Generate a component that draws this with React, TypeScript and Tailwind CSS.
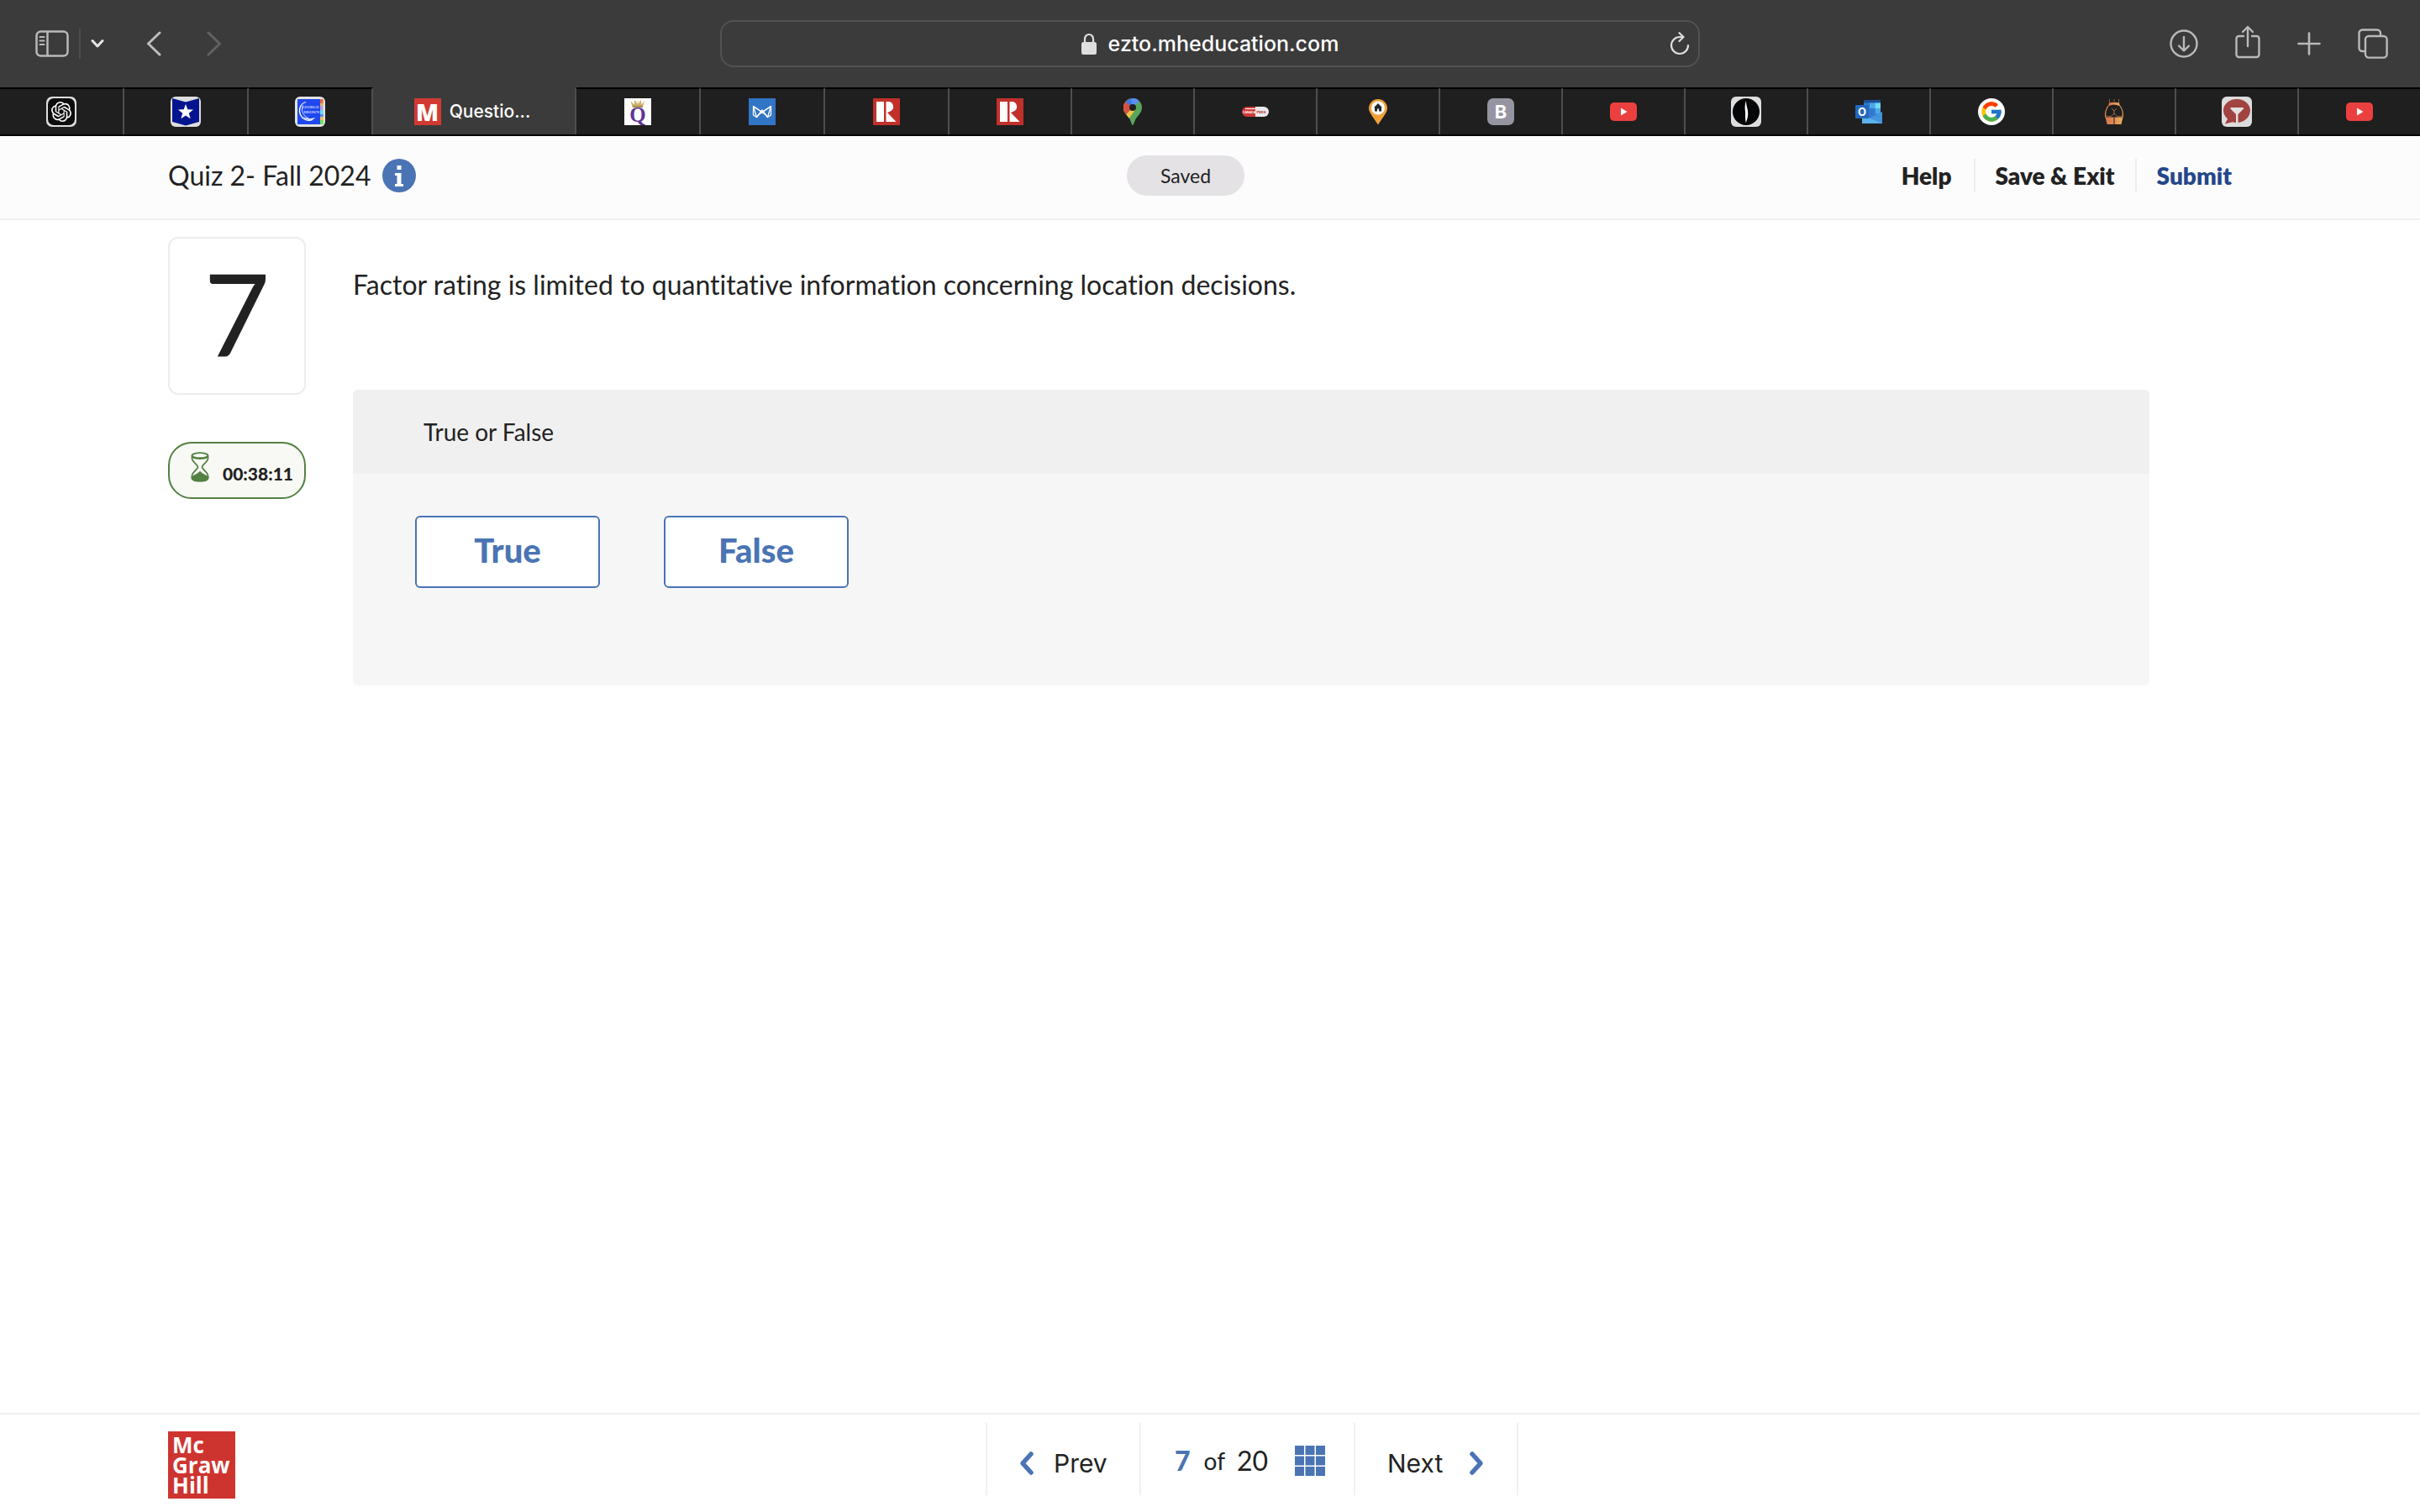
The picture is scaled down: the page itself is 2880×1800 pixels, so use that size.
import type { ReactNode } from "react";
import { SiOpenai } from "react-icons/si";
import { FcGoogle } from "react-icons/fc";

/* ---------- toolbar icons ---------- */

const SidebarIcon = () => (
  <svg width="40" height="32" viewBox="0 0 40 32" fill="none" stroke="#b9b9b9" strokeWidth="2.5">
    <rect x="1.5" y="1.5" width="37" height="29" rx="5" />
    <path d="M14.5 1.5v29" />
    <path d="M5.5 8h5M5.5 12.5h5M5.5 17h5" strokeWidth="2" strokeLinecap="round" />
  </svg>
);

const SmallDownIcon = () => (
  <svg width="16" height="12" viewBox="0 0 16 12" fill="none" stroke="#e6e6e6" strokeWidth="3" strokeLinecap="round" strokeLinejoin="round">
    <path d="M2 2.5l6 6.5 6-6.5" />
  </svg>
);

const BackIcon = () => (
  <svg width="18" height="30" viewBox="0 0 18 30" fill="none" stroke="#bdbdbd" strokeWidth="3" strokeLinecap="round" strokeLinejoin="round">
    <path d="M16 2L2.5 15 16 28" />
  </svg>
);

const ForwardIcon = () => (
  <svg width="18" height="30" viewBox="0 0 18 30" fill="none" stroke="#626262" strokeWidth="3" strokeLinecap="round" strokeLinejoin="round">
    <path d="M2 2l13.5 13L2 28" />
  </svg>
);

const LockIcon = () => (
  <svg width="18" height="26" viewBox="0 0 18 26">
    <path d="M4 12V7.5a5 5.5 0 0 1 10 0V12" fill="none" stroke="#dfdfdf" strokeWidth="2.2" />
    <rect x="0" y="11" width="18" height="15" rx="2.5" fill="#dfdfdf" />
  </svg>
);

const ReloadIcon = () => (
  <svg width="24" height="28" viewBox="0 0 24 28" fill="none" stroke="#dedede" strokeWidth="2.2" strokeLinecap="round" strokeLinejoin="round">
    <path d="M22 16a10 10 0 1 1-10-10h4" />
    <path d="M11.5 1.2L16.5 6l-5 5" />
  </svg>
);

const DownloadIcon = () => (
  <svg width="34" height="36" viewBox="0 0 34 36" fill="none" stroke="#b9b9b9" strokeWidth="2.4" strokeLinecap="round" strokeLinejoin="round">
    <circle cx="17" cy="18" r="15.5" />
    <path d="M17 10v16M11 20.5l6 6 6-6" />
  </svg>
);

const ShareIcon = () => (
  <svg width="30" height="40" viewBox="0 0 30 40" fill="none" stroke="#b9b9b9" strokeWidth="2.4" strokeLinecap="round" strokeLinejoin="round">
    <path d="M10 13H4.5A3 3 0 0 0 1.500 16v19a3 3 0 0 0 3 3h21a3 3 0 0 0 3-3V16a3 3 0 0 0-3-3H20" />
    <path d="M15 25V2M9 8l6-6 6 6" />
  </svg>
);

const PlusIcon = () => (
  <svg width="28" height="28" viewBox="0 0 28 28" fill="none" stroke="#b9b9b9" strokeWidth="2.6" strokeLinecap="round">
    <path d="M14 1.5v25M1.5 14h25" />
  </svg>
);

const TabsIcon = () => (
  <svg width="36" height="36" viewBox="0 0 36 36" fill="none" stroke="#b9b9b9" strokeWidth="2.4">
    <path d="M9 27H5.5a4 4 0 0 1-4-4V5.500a4 4 0 0 1 4-4H23a4 4 0 0 1 4 4V9" />
    <rect x="9" y="9" width="25.600" height="25.600" rx="4" />
  </svg>
);

/* ---------- tab favicons ---------- */

const OpenAiFavicon = () => (
  <span className="flex size-9 items-center justify-center rounded-[7px] bg-[#dedede]">
    <span className="flex size-8 items-center justify-center rounded-[7px] bg-[#0d0d0d] text-white">
      <SiOpenai size={24} />
    </span>
  </span>
);

const StarFavicon = () => (
  <svg width="36" height="36" viewBox="0 0 36 36">
    <rect width="36" height="36" rx="6" fill="#dedede" />
    <path d="M2 2l16 4.500L34 2v28l-16 4.500L2 30z" fill="#04148f" />
    <path d="M18 9l2.300 6.300 6.700.3-5.200 4.200 1.800 6.500-5.600-3.700-5.600 3.700 1.800-6.500L9 15.600l6.700-.3z" fill="#fff" />
  </svg>
);

const GeorgeBrownFavicon = () => (
  <svg width="36" height="36" viewBox="0 0 36 36">
    <rect width="36" height="36" rx="6" fill="#e2e2e2" />
    <rect x="3" y="3" width="27" height="30" fill="#1f48ee" />
    <rect x="30" y="3" width="3.500" height="30" fill="#b69be0" />
    <rect x="30" y="3" width="3.500" height="5" fill="#ee6a2c" />
    <rect x="30" y="8" width="3.500" height="3" fill="#f0b45a" />
    <rect x="30" y="16" width="3.500" height="5" fill="#63dcf5" />
    <rect x="30" y="21" width="3.500" height="3" fill="#4b8df0" />
    <rect x="30" y="24" width="3.500" height="4" fill="#f3c04e" />
    <rect x="30" y="28" width="3.500" height="5" fill="#6dea4b" />
    <path d="M13 6.500C6 8.500 4 16 6.500 21.500 9 27 15 30 21 27.500" fill="none" stroke="#fff" strokeWidth="1.300" />
    <path d="M9.500 10.500c-2.500 6 0 12.500 6.500 15" fill="none" stroke="#fff" strokeWidth=".8" />
    <path d="M9 23.500c4 5 11 6 15.500 1.500-4.500 1.500-10 2-15.500-1.500z" fill="#fff" />
    <text x="8.500" y="13.500" fontSize="5" fontFamily="Liberation Serif, serif" fill="#fff">GEORGE</text>
    <text x="10.500" y="19.500" fontSize="5" fontFamily="Liberation Serif, serif" fill="#fff">BROWN</text>
  </svg>
);

const McGrawFavicon = () => (
  <span className="flex size-8 items-center justify-center bg-[#d23a31] font-['Open_Sans',sans-serif] text-[28px] leading-8 font-extrabold text-white">M</span>
);

const QFavicon = () => (
  <svg width="32" height="32" viewBox="0 0 32 32">
    <rect width="32" height="32" fill="#fff" />
    <path d="M9.500 10.500L7.500 3l4 4.500L12.500 1.500l3 5.500L16 .5l.8 6.500 2.700-5.500 1 6L24 3l-2 7.500z" fill="#cdb06a" />
    <path d="M10 10h12" stroke="#8f7436" strokeWidth="1.300" />
    <text x="16" y="27.500" textAnchor="middle" fontSize="25" fontWeight="700" fontFamily="Liberation Serif, serif" fill="#5f3596">Q</text>
  </svg>
);

const FoxFavicon = () => (
  <svg width="32" height="32" viewBox="0 0 32 32" fill="none" stroke="#fff" strokeWidth="1.300" strokeLinejoin="round">
    <rect width="32" height="32" fill="#3274c5" stroke="none" />
    <path d="M5.500 9.500l10.500 7 10.500-7V20l-4 2.500L16 14l-6.500 8.500-4-2.500z" />
    <path d="M5.500 9.500L20 19.500l2.500 3M26.500 9.500L12 19.500l-2.500 3M5.500 9.500l4 13M26.500 9.500l-4 13" />
  </svg>
);

const RealtorFavicon = () => (
  <svg width="32" height="32" viewBox="0 0 32 32">
    <rect width="32" height="32" fill="#c2302b" />
    <rect x="4" y="4" width="9" height="24" fill="#fff" />
    <path d="M15.500 4H18a6 6 0 0 1 2.500 11.500L17 17l10.500 11h-12z" fill="#fff" />
  </svg>
);

const MapsFavicon = () => (
  <svg width="32" height="32" viewBox="0 0 32 32">
    <clipPath id="maps-pin">
      <path d="M16 0a11 11 0 0 1 11 11c0 6-4 8.500-7 13-1.800 2.700-2.800 8-4 8s-2.200-5.300-4-8c-3-4.500-7-7-7-13A11 11 0 0 1 16 0z" />
    </clipPath>
    <g clipPath="url(#maps-pin)">
      <rect width="32" height="32" fill="#5aa55c" />
      <path d="M0 28L20 4 4 0 0 14z" fill="#f4c243" />
      <path d="M0 16V0h12l4 11-9 9z" fill="#da5040" />
      <path d="M7 4L16 11 25 1 16-2z" fill="#3b78e0" />
      <path d="M16 11L25 2l-8-4-3 4z" fill="#5a8df0" />
      <path d="M6 22l10-11 3 3-9 12z" fill="#f4c243" />
    </g>
    <circle cx="16" cy="11" r="4" fill="#1f1f1f" />
  </svg>
);

const PillFavicon = () => (
  <svg width="32" height="32" viewBox="0 0 32 32">
    <path d="M6 10h10v12H6a6 6 0 0 1 0-12z" fill="#cf3a38" />
    <path d="M16 10h10a6 6 0 0 1 0 12H16z" fill="#e9e9e9" />
    <path d="M4 12.500h12" stroke="#fff" strokeWidth="1" />
    <text x="1" y="17.700" fontSize="3.500" fontWeight="700" fontFamily="Liberation Sans, sans-serif" fill="#fff">CANADA</text>
    <text x="17.500" y="17.900" fontSize="4" fontWeight="700" fontFamily="Liberation Sans, sans-serif" fill="#b3262a">PEDS</text>
  </svg>
);

const HousePinFavicon = () => (
  <svg width="32" height="32" viewBox="0 0 32 32">
    <path d="M16 1a11 11 0 0 1 11 11c0 5-5 10-11 19.500C10 22 5 17 5 12A11 11 0 0 1 16 1z" fill="#efa13c" />
    <circle cx="16" cy="11.500" r="8" fill="#fff" />
    <path d="M16 6l5 5h-1v4.500h-3v-3h-2v3h-3V11h-1z" fill="#23272e" />
  </svg>
);

const BFavicon = () => (
  <span className="flex size-8 items-center justify-center rounded-[7px] bg-[#9595a2] font-['Inter',sans-serif] text-[22px] leading-8 font-bold text-white">B</span>
);

const YoutubeFavicon = () => (
  <svg width="32" height="32" viewBox="0 0 32 32">
    <rect y="5" width="32" height="22" rx="5" fill="#ec4040" />
    <path d="M13 11.500v9l7.500-4.500z" fill="#fff" />
  </svg>
);

const FlameFavicon = () => (
  <svg width="36" height="36" viewBox="0 0 36 36">
    <rect width="36" height="36" rx="6" fill="#dedede" />
    <circle cx="18" cy="18" r="16" fill="#050608" />
    <path d="M18 5c-2 6-1.300 9-1 13 .2 4-.3 8 .7 13 2.300-5 3-9 2.300-14-.5-4-2-7-2-12z" fill="#fff" />
  </svg>
);

const OutlookFavicon = () => (
  <svg width="32" height="32" viewBox="0 0 32 32">
    <rect x="10" y="2" width="20" height="24" fill="#3279cf" />
    <rect x="10" y="2" width="20" height="3.500" fill="#1d4f97" />
    <rect x="17" y="5.500" width="6.500" height="6.500" fill="#4ba6e4" />
    <rect x="23.500" y="5.500" width="6.500" height="6.500" fill="#72dafa" />
    <rect x="23.500" y="12" width="6.500" height="6.500" fill="#4ba6e4" />
    <rect x="17" y="12" width="6.500" height="6.500" fill="#2f7ad0" />
    <path d="M32 16v14H8l12-8z" fill="#4394dc" />
    <path d="M8 20l24 10H8z" fill="#5cb2ec" />
    <rect y="8" width="16" height="16" rx="1" fill="#2468bd" />
    <text x="8" y="21" textAnchor="middle" fontSize="13" fontWeight="700" fontFamily="Inter, sans-serif" fill="#fff">O</text>
  </svg>
);

const GoogleFavicon = () => (
  <span className="flex size-8 items-center justify-center rounded-full bg-white">
    <FcGoogle size={28} />
  </span>
);

const FigureFavicon = () => (
  <svg width="32" height="32" viewBox="0 0 32 32">
    <defs>
      <linearGradient id="figure-fade" x1="0" x2="1">
        <stop offset="0" stopColor="#d9714f" />
        <stop offset="1" stopColor="#e8ae5e" />
      </linearGradient>
    </defs>
    <path d="M10.500 1v5M21.500 1v5M16 1v3" stroke="#8a5a3c" strokeWidth="1" />
    <path d="M10 5.500c4-1 8-1 12 0l1 4c-4-2.500-10-2.500-14 0z" fill="url(#figure-fade)" />
    <path d="M9 9c-4 6-4 10-3 14M23 9c4 6 4 10 3 14" fill="none" stroke="#d98a55" strokeWidth="1.300" />
    <path d="M7 21c4 2 7 0 9-3 2 3 5 5 9 3M13 12l3 3 3-3M16 15v4" fill="none" stroke="#a86a45" strokeWidth="1" />
    <path d="M5.500 22.500h10V31H7.500zM16.500 22.500h10L24.500 31h-8z" fill="url(#figure-fade)" />
  </svg>
);

const FunnelFavicon = () => (
  <svg width="36" height="36" viewBox="0 0 36 36">
    <rect width="36" height="36" rx="6" fill="#dcdcdc" />
    <path d="M18 3c9 0 16 6 16 13.500S27 31 18 31c-2 0-3.500-.2-5-.7L4 32.500l3-6C4 24 2 20.500 2 16.500 2 9 9 3 18 3z" fill="#a14340" />
    <path d="M10.500 13h15.500v1.500L19.500 21v10h-2.500V21l-6.500-6.500z" fill="#e3e0e0" />
  </svg>
);

/* ---------- page icons ---------- */

const InfoIcon = () => (
  <svg width="40" height="40" viewBox="0 0 40 40">
    <circle cx="20" cy="20" r="20" fill="#4a74b4" />
    <path d="M17.500 8h5v5h-5zM15 17h7.500v13H25v3H15v-3h2.500V20H15z" fill="#fff" />
  </svg>
);

const HourglassIcon = () => (
  <svg width="22" height="36" viewBox="0 0 22 36" fill="none" stroke="#538142" strokeWidth="1.800">
    <path d="M1.500 4.500v3C1.500 12 8.500 15 8.500 18S1.500 24 1.500 28.500v3M20.500 4.500v3c0 4.500-7 7.500-7 10.500s7 6 7 10.500v3" />
    <ellipse cx="11" cy="4.200" rx="9.500" ry="3" />
    <path d="M2 6.500c4 2.500 14 2.500 18 0" strokeWidth="1.300" />
    <path d="M1.500 30c2-2 7-2.500 9.500-6 2.500 3.500 7.500 4 9.500 6v1.800c-2 4-17 4-19 0z" fill="#538142" />
  </svg>
);

const Chevron = ({ d }: { d: string }) => (
  <svg width="20" height="30" viewBox="0 0 20 30" fill="none" stroke="#4a74b4" strokeWidth="5.500" strokeLinecap="round" strokeLinejoin="round">
    <path d={d} />
  </svg>
);

const GridIcon = () => (
  <svg width="36" height="36" viewBox="0 0 36 36" fill="#4a74b4">
    {[0, 12.5, 25].map((y) => [0, 12.5, 25].map((x) => <rect key={`${x}-${y}`} x={x} y={y} width="11" height="11" />))}
  </svg>
);

/* ---------- browser chrome ---------- */

const wideTabs: { name: string; icon: ReactNode }[] = [
  { name: "ChatGPT", icon: <OpenAiFavicon /> },
  { name: "Course Hero", icon: <StarFavicon /> },
  { name: "George Brown College", icon: <GeorgeBrownFavicon /> },
];

const midTabs: { name: string; icon: ReactNode }[] = [
  { name: "Q", icon: <QFavicon /> },
  { name: "Fox", icon: <FoxFavicon /> },
  { name: "Realtor", icon: <RealtorFavicon /> },
];

const narrowTabs: { name: string; icon: ReactNode }[] = [
  { name: "Realtor", icon: <RealtorFavicon /> },
  { name: "Google Maps", icon: <MapsFavicon /> },
  { name: "Canada Peds", icon: <PillFavicon /> },
  { name: "House finder", icon: <HousePinFavicon /> },
  { name: "B", icon: <BFavicon /> },
  { name: "YouTube", icon: <YoutubeFavicon /> },
  { name: "Sephora", icon: <FlameFavicon /> },
  { name: "Outlook", icon: <OutlookFavicon /> },
  { name: "Google", icon: <GoogleFavicon /> },
  { name: "Figure", icon: <FigureFavicon /> },
  { name: "Funnel", icon: <FunnelFavicon /> },
  { name: "YouTube", icon: <YoutubeFavicon /> },
];

const Tab = ({ name, wide, children }: { name: string; wide?: boolean; children: ReactNode }) => (
  <button
    aria-label={name}
    className={`${wide ? "flex-[148]" : "flex-[146]"} flex min-w-0 items-center justify-center border-t-2 border-r-2 border-t-black border-r-[#4e4e4e] bg-[#1f1f1f] last:border-r-0`}
  >
    {children}
  </button>
);

const BrowserChrome = () => (
  <header className="font-['Inter',sans-serif] text-white">
    <div className="grid h-[104px] grid-cols-[1fr_40.5%_1fr] items-center bg-[#3b3b3b]">
      <div className="flex items-center pl-[42px]">
        <button aria-label="Show sidebar"><SidebarIcon /></button>
        <span className="ml-3 h-9 w-0.5 bg-[#4d4d4d]" />
        <button aria-label="Sidebar options" className="ml-3"><SmallDownIcon /></button>
        <button aria-label="Back" className="ml-[50px]"><BackIcon /></button>
        <button aria-label="Forward" className="ml-[54px]"><ForwardIcon /></button>
      </div>
      <div className="grid h-14 grid-cols-[1fr_auto_1fr] items-center rounded-2xl border-2 border-[#525252] px-[10px]">
        <div className="col-start-2 flex items-center gap-[14px]">
          <LockIcon />
          <span className="text-[25px] leading-8 font-medium">ezto.mheducation.com</span>
        </div>
        <button aria-label="Reload" className="justify-self-end"><ReloadIcon /></button>
      </div>
      <div className="flex items-center justify-end gap-11 pr-[38px]">
        <button aria-label="Downloads"><DownloadIcon /></button>
        <button aria-label="Share" className="pb-1"><ShareIcon /></button>
        <button aria-label="New tab"><PlusIcon /></button>
        <button aria-label="Tab overview"><TabsIcon /></button>
      </div>
    </div>
    <nav aria-label="Tabs" className="flex h-[58px] border-b-2 border-black bg-[#3b3b3b]">
      {wideTabs.map((t) => <Tab key={t.name} name={t.name} wide>{t.icon}</Tab>)}
      <button className="flex w-[242px] items-center justify-center gap-[10px] border-t-2 border-r-2 border-t-[#3b3b3b] border-r-[#4e4e4e] pr-1">
        <McGrawFavicon />
        <span className="text-[21px] leading-8 font-medium">Questio...</span>
      </button>
      {midTabs.map((t) => <Tab key={t.name} name={t.name} wide>{t.icon}</Tab>)}
      {narrowTabs.map((t, i) => <Tab key={i} name={t.name}>{t.icon}</Tab>)}
    </nav>
  </header>
);

/* ---------- quiz page ---------- */

const QuizHeader = () => (
  <div className="grid h-[100px] grid-cols-[1fr_auto_1fr] items-center border-b-2 border-[#f0f0f0] bg-[#fcfcfc] pr-[224px] pb-1 pl-[166px]">
    <div className="flex items-center gap-[14px] pl-[34px]">
      <h1 className="text-[32px] leading-10">Quiz 2- Fall 2024</h1>
      <button aria-label="Quiz information"><InfoIcon /></button>
    </div>
    <span className="rounded-full bg-[#e4e2e5] px-10 py-2 text-[23px] leading-8">Saved</span>
    <div className="flex items-center justify-end text-[28px] leading-10 font-extrabold">
      <button>Help</button>
      <button className="ml-[26px] border-l-2 border-[#ededed] pl-6">Save &amp; Exit</button>
      <button className="ml-6 border-l-2 border-[#ededed] pl-6 text-[#24478a]">Submit</button>
    </div>
  </div>
);

const QuestionArea = () => (
  <main className="flex flex-1 items-start gap-14 pt-5 pr-[322px] pl-[200px]">
    <aside className="flex w-[164px] flex-col gap-14">
      <div className="flex h-[188px] items-center justify-center rounded-xl border-2 border-[#ededed] pb-2 text-[136px]">7</div>
      <div className="flex h-[68px] items-center gap-4 rounded-[28px] border-2 border-[#538142] bg-[#f8f9f5] pl-[25px]">
        <span className="pb-2"><HourglassIcon /></span>
        <time className="pt-2 text-[21px] leading-8 font-black">00:38:11</time>
      </div>
    </aside>
    <section className="flex-1">
      <p className="pt-[37px] pb-[105px] text-[32px] leading-10">
        Factor rating is limited to quantitative information concerning location decisions.
      </p>
      <div className="overflow-hidden rounded-md bg-[#f6f6f6]">
        <h2 className="bg-[#f0f0f0] py-[30px] pl-[84px] text-[28px] leading-10">True or False</h2>
        <div className="flex gap-[76px] px-[74px] pt-[50px] pb-[116px]">
          {["True", "False"].map((answer) => (
            <button key={answer} className="h-[86px] w-[220px] rounded-md border-2 border-[#4a74b4] bg-white pb-1 text-[40px] font-black text-[#4a74b4]">
              {answer}
            </button>
          ))}
        </div>
      </div>
    </section>
  </main>
);

const Footer = () => (
  <footer className="grid grid-cols-[1fr_auto_1fr] items-start border-t-2 border-[#f0f0f0] pr-[100px] pl-[200px]">
    <a href="#mcgraw-hill" className="mt-5 mb-4 block size-20 bg-[#ce342f] pt-1 pl-[5px] font-['Open_Sans',sans-serif] text-[26px] leading-6 font-bold text-white">
      Mc<br />Graw<br />Hill
    </a>
    <nav aria-label="Questions" className="mt-[10px] flex h-[86px] border-r-2 border-[#f0f0f0]">
      <button className="flex w-[183px] items-center gap-[22px] border-l-2 border-[#f0f0f0] pt-[10px] pl-[37px] font-['Inter',sans-serif] text-[30px]">
        <Chevron d="M15 4L5 15l10 11" />
        Prev
      </button>
      <div className="flex w-[255px] items-center border-l-2 border-[#f0f0f0] pt-1 pl-10 text-[32px]">
        <span className="font-black text-[#4a74b4]">7</span>
        <span className="ml-4 text-[28px]">of</span>
        <span className="ml-[14px]">20</span>
        <button aria-label="Question list" className="ml-8"><GridIcon /></button>
      </div>
      <button className="flex w-[194px] items-center gap-[30px] border-l-2 border-[#f0f0f0] pt-[10px] pl-[38px] font-['Inter',sans-serif] text-[30px]">
        Next
        <Chevron d="M5 4l10 11L5 26" />
      </button>
    </nav>
  </footer>
);

export default function App() {
  return (
    <div className="flex min-h-screen flex-col bg-white font-['Lato',sans-serif] text-[#222] [font-variant-ligatures:none]">
      <BrowserChrome />
      <QuizHeader />
      <QuestionArea />
      <Footer />
    </div>
  );
}
